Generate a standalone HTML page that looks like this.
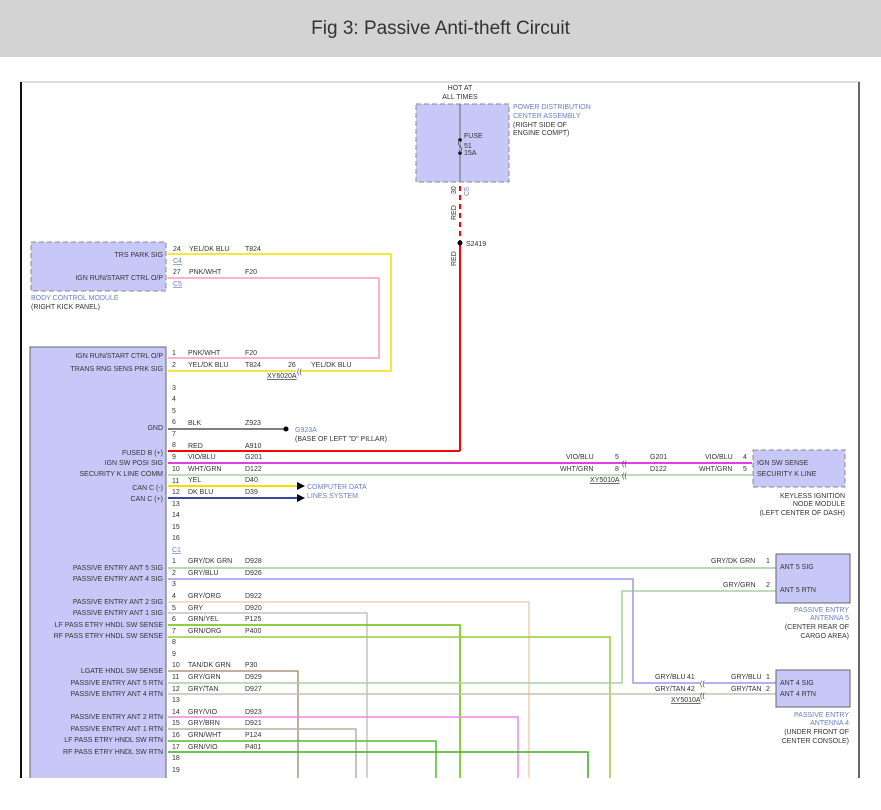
<!DOCTYPE html>
<html><head><meta charset="utf-8"><style>
html,body{margin:0;padding:0;background:#fff;width:881px;height:810px;overflow:hidden}
.hd{position:absolute;left:0;top:0;width:881px;height:57px;background:#d3d3d3;font:19px "Liberation Sans",sans-serif;color:#333;text-align:center;line-height:57px}
svg{position:absolute;left:0;top:0}
text{font-family:"Liberation Sans",sans-serif;font-size:7px;fill:#333}
.b{fill:#6a7fc8}
.r{text-anchor:end}
.m{text-anchor:middle}
</style></head><body>
<div class="hd">Fig 3: Passive Anti-theft Circuit</div>
<svg width="881" height="810" viewBox="0 0 881 810">
<line x1="20" y1="82" x2="860" y2="82" stroke="#bbb" stroke-width="1"/>
<line x1="21" y1="82" x2="21" y2="778" stroke="#111" stroke-width="2"/>
<line x1="859" y1="82" x2="859" y2="778" stroke="#333" stroke-width="1.5"/>

<rect x="416" y="104" width="93" height="78" fill="#c8c8f8" stroke="#888" stroke-dasharray="5,3"/>
<line x1="460" y1="104" x2="460" y2="182" stroke="#777" stroke-width="1.2"/>
<circle cx="460" cy="140" r="1.8" fill="#000"/><circle cx="460" cy="153" r="1.8" fill="#000"/>
<path d="M460 140 q-3 3 0 6 q3 3 0 7" fill="#c8c8f8" stroke="#555"/>
<text x="464" y="138">FUSE</text><text x="464" y="148">51</text><text x="464" y="155">15A</text>
<text x="460" y="90" class="m">HOT AT</text><text x="460" y="99" class="m">ALL TIMES</text>
<text x="513" y="109" class="b">POWER DISTRIBUTION</text><text x="513" y="118" class="b">CENTER ASSEMBLY</text>
<text x="513" y="127">(RIGHT SIDE OF</text><text x="513" y="135">ENGINE COMPT)</text>
<line x1="460" y1="186" x2="460" y2="242" stroke="#f00" stroke-width="2" stroke-dasharray="5,4"/>
<line x1="460" y1="243" x2="460" y2="451" stroke="#f00" stroke-width="2"/>
<circle cx="460" cy="243" r="2.5" fill="#000"/>
<text x="466" y="246">S2419</text>
<text transform="translate(456,194) rotate(-90)">30</text>
<text transform="translate(469,196) rotate(-90)" class="b">C5</text>
<text transform="translate(456,220) rotate(-90)">RED</text>
<text transform="translate(456,266) rotate(-90)">RED</text>

<rect x="31" y="242" width="135" height="49" fill="#c8c8f8" stroke="#888" stroke-dasharray="5,3"/>
<text x="163" y="257" class="r">TRS PARK SIG</text>
<text x="163" y="280" class="r">IGN RUN/START CTRL O/P</text>
<text x="31" y="300" class="b">BODY CONTROL MODULE</text>
<text x="31" y="309">(RIGHT KICK PANEL)</text>
<text x="173" y="251">24</text><text x="189" y="251">YEL/DK BLU</text><text x="245" y="251">T824</text>
<text x="173" y="263" class="b" text-decoration="underline">C4</text>
<text x="173" y="274">27</text><text x="189" y="274">PNK/WHT</text><text x="245" y="274">F20</text>
<text x="173" y="286" class="b" text-decoration="underline">C5</text>
<polyline points="168,254 391,254 391,371 300,371" fill="none" stroke="#f0e000" stroke-width="1.5"/>
<polyline points="168,278 379,278 379,358 168,358" fill="none" stroke="#ff99bb" stroke-width="1.5"/>
<line x1="168" y1="371" x2="296" y2="371" stroke="#f0e000" stroke-width="1.5"/>

<rect x="30" y="347" width="136" height="440" fill="#c8c8f8" stroke="#666"/>
<text x="163" y="358" class="r">IGN RUN/START CTRL O/P</text>
<text x="163" y="371" class="r">TRANS RNG SENS PRK SIG</text>
<text x="163" y="430" class="r">GND</text>
<text x="163" y="455" class="r">FUSED B (+)</text>
<text x="163" y="465" class="r">IGN SW POSI SIG</text>
<text x="163" y="476" class="r">SECURITY K LINE COMM</text>
<text x="163" y="490" class="r">CAN C (-)</text>
<text x="163" y="501" class="r">CAN C (+)</text>
<text x="163" y="570" class="r">PASSIVE ENTRY ANT 5 SIG</text>
<text x="163" y="581" class="r">PASSIVE ENTRY ANT 4 SIG</text>
<text x="163" y="604" class="r">PASSIVE ENTRY ANT 2 SIG</text>
<text x="163" y="615" class="r">PASSIVE ENTRY ANT 1 SIG</text>
<text x="163" y="627" class="r">LF PASS ETRY HNDL SW SENSE</text>
<text x="163" y="638" class="r">RF PASS ETRY HNDL SW SENSE</text>
<text x="163" y="673" class="r">LGATE HNDL SW SENSE</text>
<text x="163" y="685" class="r">PASSIVE ENTRY ANT 5 RTN</text>
<text x="163" y="696" class="r">PASSIVE ENTRY ANT 4 RTN</text>
<text x="163" y="719" class="r">PASSIVE ENTRY ANT 2 RTN</text>
<text x="163" y="731" class="r">PASSIVE ENTRY ANT 1 RTN</text>
<text x="163" y="742" class="r">LF PASS ETRY HNDL SW RTN</text>
<text x="163" y="754" class="r">RF PASS ETRY HNDL SW RTN</text>

<text x="172" y="355">1</text><text x="172" y="367">2</text><text x="172" y="390">3</text><text x="172" y="401">4</text>
<text x="172" y="413">5</text><text x="172" y="424">6</text><text x="172" y="436">7</text><text x="172" y="447">8</text>
<text x="172" y="459">9</text><text x="172" y="471">10</text><text x="172" y="483">11</text><text x="172" y="494">12</text>
<text x="172" y="506">13</text><text x="172" y="517">14</text><text x="172" y="529">15</text><text x="172" y="540">16</text>
<text x="172" y="552" class="b" text-decoration="underline">C1</text>
<text x="172" y="563">1</text><text x="172" y="575">2</text><text x="172" y="586">3</text><text x="172" y="598">4</text>
<text x="172" y="610">5</text><text x="172" y="621">6</text><text x="172" y="633">7</text><text x="172" y="644">8</text>
<text x="172" y="656">9</text><text x="172" y="667">10</text><text x="172" y="679">11</text><text x="172" y="691">12</text>
<text x="172" y="702">13</text><text x="172" y="714">14</text><text x="172" y="725">15</text><text x="172" y="737">16</text>
<text x="172" y="749">17</text><text x="172" y="760">18</text><text x="172" y="772">19</text>

<text x="188" y="355">PNK/WHT</text><text x="245" y="355">F20</text>
<text x="188" y="367">YEL/DK BLU</text><text x="245" y="367">T824</text>
<text x="288" y="367">26</text><text x="311" y="367">YEL/DK BLU</text>
<text x="267" y="378" text-decoration="underline">XY6020A</text>
<text x="297" y="374" font-size="9">((</text>
<text x="188" y="425">BLK</text><text x="245" y="425">Z923</text>
<text x="188" y="448">RED</text><text x="245" y="448">A910</text>
<text x="188" y="459">VIO/BLU</text><text x="245" y="459">G201</text>
<text x="188" y="471">WHT/GRN</text><text x="245" y="471">D122</text>
<text x="188" y="482">YEL</text><text x="245" y="482">D40</text>
<text x="188" y="494">DK BLU</text><text x="245" y="494">D39</text>
<line x1="168" y1="429" x2="284" y2="429" stroke="#555" stroke-width="1.5"/>
<circle cx="286" cy="429" r="2.5" fill="#000"/>
<text x="295" y="432" class="b">G923A</text>
<text x="295" y="441">(BASE OF LEFT "D" PILLAR)</text>
<line x1="168" y1="451" x2="460" y2="451" stroke="#f00" stroke-width="2"/>
<line x1="168" y1="463" x2="752" y2="463" stroke="#e040e0" stroke-width="2"/>
<line x1="168" y1="475" x2="752" y2="475" stroke="#a8d0a0" stroke-width="1.5"/>
<line x1="168" y1="486" x2="298" y2="486" stroke="#f0e000" stroke-width="2"/>
<line x1="168" y1="498" x2="298" y2="498" stroke="#3a4a9a" stroke-width="2"/>
<polygon points="297,482 305,486 297,490" fill="#000"/>
<polygon points="297,494 305,498 297,502" fill="#000"/>
<text x="307" y="489" class="b">COMPUTER DATA</text><text x="307" y="498" class="b">LINES SYSTEM</text>
<text x="566" y="459">VIO/BLU</text><text x="615" y="459">5</text>
<text x="560" y="471">WHT/GRN</text><text x="615" y="471">8</text>
<text x="622" y="466" font-size="9">((</text><text x="622" y="478" font-size="9">((</text>
<text x="590" y="482" text-decoration="underline">XY5010A</text>
<text x="650" y="459">G201</text><text x="650" y="471">D122</text>
<text x="705" y="459">VIO/BLU</text><text x="743" y="459">4</text>
<text x="699" y="471">WHT/GRN</text><text x="743" y="471">5</text>
<rect x="753" y="450" width="92" height="37" fill="#c8c8f8" stroke="#888" stroke-dasharray="5,3"/>
<text x="757" y="465">IGN SW SENSE</text><text x="757" y="476">SECURITY K LINE</text>
<text x="845" y="498" class="r">KEYLESS IGNITION</text>
<text x="845" y="506" class="r">NODE MODULE</text>
<text x="845" y="515" class="r">(LEFT CENTER OF DASH)</text>

<g fill="none" stroke-width="1.5">
<polyline points="168,568 776,568" stroke="#a8c8a0"/>
<polyline points="168,602 529,602 529,778" stroke="#f0d0b0"/>
<polyline points="168,613 367,613 367,778" stroke="#c4c4c4"/>
<polyline points="168,625 460,625 460,778" stroke="#66c000"/>
<polyline points="168,637 610,637 610,778" stroke="#99cc33"/>
<polyline points="168,671 298,671 298,778" stroke="#a89878"/>
<polyline points="168,683 622,683 622,591 776,591" stroke="#a8d0a0"/>
<polyline points="168,579 633,579 633,683 700,683" stroke="#9a9ae8"/>
<polyline points="704,683 776,683" stroke="#9a9ae8"/>
<polyline points="168,694 776,694" stroke="#c8c0b0"/>
<polyline points="168,717 518,717 518,778" stroke="#e888e8"/>
<polyline points="168,729 356,729 356,778" stroke="#b8b0a0"/>
<polyline points="168,741 436,741 436,778" stroke="#55bb33"/>
<polyline points="168,752 588,752 588,778" stroke="#44aa22"/>
</g>
<text x="188" y="563">GRY/DK GRN</text><text x="245" y="563">D928</text>
<text x="188" y="575">GRY/BLU</text><text x="245" y="575">D926</text>
<text x="188" y="598">GRY/ORG</text><text x="245" y="598">D922</text>
<text x="188" y="610">GRY</text><text x="245" y="610">D920</text>
<text x="188" y="621">GRN/YEL</text><text x="245" y="621">P125</text>
<text x="188" y="633">GRN/ORG</text><text x="245" y="633">P400</text>
<text x="188" y="667">TAN/DK GRN</text><text x="245" y="667">P30</text>
<text x="188" y="679">GRY/GRN</text><text x="245" y="679">D929</text>
<text x="188" y="691">GRY/TAN</text><text x="245" y="691">D927</text>
<text x="188" y="714">GRY/VIO</text><text x="245" y="714">D923</text>
<text x="188" y="725">GRY/BRN</text><text x="245" y="725">D921</text>
<text x="188" y="737">GRN/WHT</text><text x="245" y="737">P124</text>
<text x="188" y="749">GRN/VIO</text><text x="245" y="749">P401</text>
<text x="711" y="563">GRY/DK GRN</text><text x="766" y="563">1</text>
<text x="723" y="587">GRY/GRN</text><text x="766" y="587">2</text>
<rect x="776" y="554" width="74" height="49" fill="#c8c8f8" stroke="#666"/>
<text x="780" y="569">ANT 5 SIG</text><text x="780" y="592">ANT 5 RTN</text>
<text x="849" y="612" class="r b">PASSIVE ENTRY</text>
<text x="849" y="620" class="r b">ANTENNA 5</text>
<text x="849" y="629" class="r">(CENTER REAR OF</text>
<text x="849" y="638" class="r">CARGO AREA)</text>
<text x="655" y="679">GRY/BLU</text><text x="687" y="679">41</text>
<text x="655" y="691">GRY/TAN</text><text x="687" y="691">42</text>
<text x="700" y="686" font-size="9">((</text><text x="700" y="698" font-size="9">((</text>
<text x="671" y="702" text-decoration="underline">XY5010A</text>
<text x="731" y="679">GRY/BLU</text><text x="766" y="679">1</text>
<text x="731" y="691">GRY/TAN</text><text x="766" y="691">2</text>
<rect x="776" y="670" width="74" height="37" fill="#c8c8f8" stroke="#666"/>
<text x="780" y="685">ANT 4 SIG</text><text x="780" y="696">ANT 4 RTN</text>
<text x="849" y="717" class="r b">PASSIVE ENTRY</text>
<text x="849" y="725" class="r b">ANTENNA 4</text>
<text x="849" y="734" class="r">(UNDER FRONT OF</text>
<text x="849" y="743" class="r">CENTER CONSOLE)</text>
<rect x="0" y="778" width="881" height="32" fill="#fff"/>
</svg>
</body></html>
